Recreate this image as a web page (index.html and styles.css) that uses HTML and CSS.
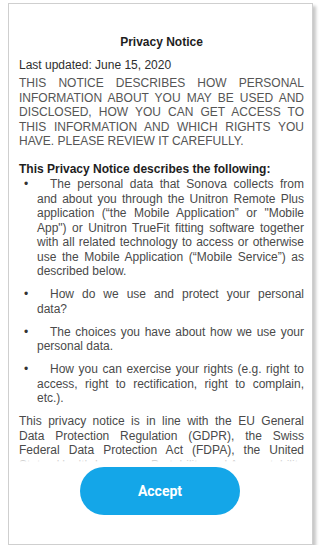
FILE: index.html
```html
<!DOCTYPE html>
<html>
<head>
<meta charset="utf-8">
<link rel="stylesheet" href="styles.css">
</head>
<body>
<div class="card">
  <div class="scroll">
    <h1 class="title">Privacy Notice</h1>
    <p class="updated">Last updated: June 15, 2020</p>
    <p class="caps">THIS NOTICE DESCRIBES HOW PERSONAL INFORMATION ABOUT YOU MAY BE USED AND DISCLOSED, HOW YOU CAN GET ACCESS TO THIS INFORMATION AND WHICH RIGHTS YOU HAVE. PLEASE REVIEW IT CAREFULLY.</p>
    <h2 class="heading">This Privacy Notice describes the following:</h2>
    <ul class="list">
      <li>The personal data that Sonova collects from and about you through the Unitron Remote Plus application (“the Mobile Application” or "Mobile App") or Unitron TrueFit fitting software together with all related technology to access or otherwise use the Mobile Application (“Mobile Service”) as described below.</li>
      <li>How do we use and protect your personal data?</li>
      <li>The choices you have about how we use your personal data.</li>
      <li>How you can exercise your rights (e.g. right to access, right to rectification, right to complain, etc.).</li>
    </ul>
    <p class="body">This privacy notice is in line with the EU General Data Protection Regulation (GDPR), the Swiss Federal Data Protection Act (FDPA), the United States Health Insurance Portability and Accountability Act (HIPAA) and other applicable data protection laws.</p>
  </div>
  <div class="actions">
    <button class="accept">Accept</button>
  </div>
</div>
</body>
</html>
```

FILE: styles.css
```css
html, body {
  margin: 0;
  padding: 0;
  background: #ffffff;
}

body {
  font-family: "Liberation Sans", Arial, sans-serif;
  font-size: 12px;
  line-height: 14.5px;
  color: #4a4a4a;
}

.card {
  margin: 3px 0 0 8px;
  width: 305px;
  height: 542px;
  box-sizing: border-box;
  border: 1px solid #cfcfcf;
  box-shadow: 3px 3px 3px rgba(0, 0, 0, 0.22);
  background: #fff;
  display: flex;
  flex-direction: column;
}

.scroll {
  height: 458px;
  flex: none;
  overflow: hidden;
  padding: 31px 8px 0 10px;
  box-sizing: border-box;
  position: relative;
}

.scroll::after {
  content: "";
  position: absolute;
  left: 0;
  right: 0;
  bottom: 0;
  height: 6px;
  background: linear-gradient(rgba(255,255,255,0), #fff);
}

.title {
  margin: 0 0 8px;
  font-size: 12px;
  line-height: 14.5px;
  font-weight: bold;
  text-align: center;
  color: #1e1e1e;
}

.updated {
  margin: 0 0 4px;
  color: #2e2e2e;
}

.caps {
  margin: 0 0 13px;
  text-align: justify;
  color: #555;
}

.heading {
  margin: 0 0 1px;
  font-size: 12px;
  line-height: 14.5px;
  font-weight: bold;
  color: #1e1e1e;
}

.list {
  list-style: none;
  margin: 0;
  padding: 0 0 0 18px;
}

.list li {
  text-align: justify;
  text-indent: -13px;
  margin-bottom: 8.5px;
  color: #4a4a4a;
}

.list li::before {
  content: "•";
  display: inline-block;
  text-indent: 0;
  width: 26px;
  color: #333;
}

.body {
  margin: 0;
  text-align: justify;
  color: #4a4a4a;
}

.actions {
  display: flex;
  justify-content: center;
  padding: 5px 0 0;
}

.accept {
  width: 160px;
  height: 48px;
  margin-left: -1px;
  border: none;
  border-radius: 24px;
  background: #14a6e8;
  color: #fff;
  font-family: Roboto, "Liberation Sans", Arial, sans-serif;
  font-size: 14px;
  font-weight: bold;
  padding: 0;
}
```
